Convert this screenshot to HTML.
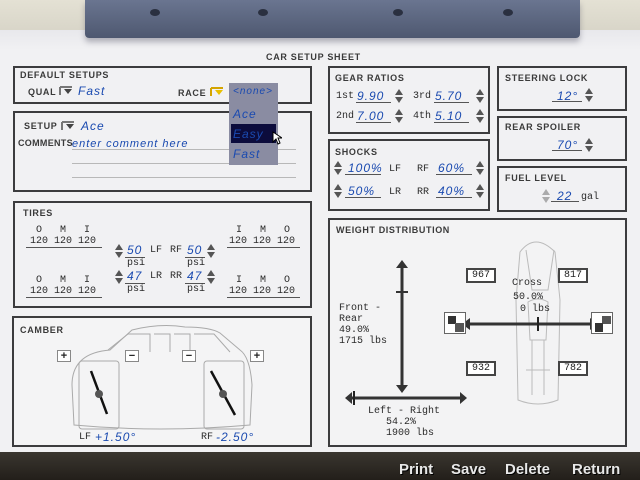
<!DOCTYPE html>
<html><head><meta charset="utf-8"><style>
*{margin:0;padding:0;box-sizing:border-box}
body{width:640px;height:480px;overflow:hidden;position:relative;background:#f1f1f3;font-family:"Liberation Sans",sans-serif}
.a{position:absolute}
.box{position:absolute;border:2px solid #3c3c3e}
.l{position:absolute;font-size:9px;font-weight:bold;color:#3a3a3a;letter-spacing:.7px;white-space:nowrap}
.m{position:absolute;font-family:"Liberation Mono",monospace;font-size:10px;color:#2a2a2a;white-space:nowrap}
.h{position:absolute;font-style:italic;color:#1a4ab0;font-size:12px;white-space:nowrap;letter-spacing:1px;font-weight:500}
.u{position:absolute;height:1px;background:#555}
.sp{position:absolute;width:10px;height:16px}
.ln{position:absolute;height:1px;background:#b8b8b8}
.pl{position:absolute;width:14px;height:12px;border:1px solid #888;background:#fff;font-size:11px;font-weight:bold;line-height:10px;text-align:center;color:#222}
.nb{position:absolute;border:2px solid #444;background:#fff;font-family:"Liberation Mono",monospace;font-size:10px;width:30px;height:15px;text-align:center;line-height:12px;color:#222}
.btn{position:absolute;top:461px;color:#e8e8e8;font-weight:bold;font-size:15px;text-shadow:1px 1px 0 #000}
</style></head><body>
<div class="a" style="left:0;top:0;width:640px;height:32px;background:linear-gradient(#e4e1d4,#d8d5c8)"></div>
<div class="a" style="left:0;top:30px;width:640px;height:20px;background:linear-gradient(#e8e8ec,#f1f1f3)"></div>
<div class="a" style="left:85px;top:0;width:495px;height:38px;background:linear-gradient(#6a7590,#4e5870);border-radius:0 0 4px 4px;box-shadow:0 4px 6px rgba(60,60,80,.35)"></div>
<div class="a" style="left:150px;top:9px;width:10px;height:7px;border-radius:50%;background:#2a3040"></div>
<div class="a" style="left:258px;top:9px;width:10px;height:7px;border-radius:50%;background:#2a3040"></div>
<div class="a" style="left:393px;top:9px;width:10px;height:7px;border-radius:50%;background:#2a3040"></div>
<div class="a" style="left:503px;top:9px;width:10px;height:7px;border-radius:50%;background:#2a3040"></div>

<div class="l" style="left:266px;top:52px">CAR SETUP SHEET</div>

<div class="box" style="left:13px;top:66px;width:299px;height:38px"></div>
<div class="l" style="left:20px;top:70px">DEFAULT SETUPS</div>
<div class="l" style="left:28px;top:87px">QUAL</div>
<svg class="a" style="left:59px;top:86px" width="14" height="10"><path d="M1 1H13M1 1V9" stroke="#777" stroke-width="2"/><path d="M5 3H13L9 8Z" fill="#444"/></svg>
<div class="h" style="left:78px;top:84px">Fast</div>
<div class="l" style="left:178px;top:88px">RACE</div>
<svg class="a" style="left:210px;top:87px" width="14" height="10"><path d="M1 1H13M1 1V9" stroke="#d4a400" stroke-width="2"/><path d="M5 3H13L9 8Z" fill="#e8c000"/></svg>

<div class="box" style="left:13px;top:111px;width:299px;height:81px"></div>
<div class="l" style="left:24px;top:121px">SETUP</div>
<svg class="a" style="left:61px;top:121px" width="14" height="10"><path d="M1 1H13M1 1V9" stroke="#777" stroke-width="2"/><path d="M5 3H13L9 8Z" fill="#444"/></svg>
<div class="h" style="left:81px;top:119px">Ace</div>
<div class="l" style="left:18px;top:138px;letter-spacing:.3px">COMMENTS</div>
<div class="h" style="left:72px;top:138px;font-size:11px">enter comment here</div>
<div class="ln" style="left:72px;top:149px;width:224px"></div>
<div class="ln" style="left:72px;top:163px;width:224px"></div>
<div class="ln" style="left:72px;top:177px;width:224px"></div>

<div class="a" style="left:229px;top:83px;width:49px;height:82px;background:#8a8ca2"></div>
<div class="a" style="left:231px;top:124px;width:45px;height:19px;background:#0c0c3c"></div>
<div class="h" style="left:233px;top:86px;font-size:10px">&lt;none&gt;</div>
<div class="h" style="left:233px;top:107px">Ace</div>
<div class="h" style="left:233px;top:127px">Easy</div>
<div class="h" style="left:233px;top:147px">Fast</div>
<svg class="a" style="left:272px;top:131px" width="10" height="14"><path d="M1 1V11L4 8L6 13L8 12L6 7H10Z" fill="#fff" stroke="#000" stroke-width="1"/></svg>

<div class="box" style="left:13px;top:201px;width:299px;height:107px"></div>
<div class="l" style="left:23px;top:208px">TIRES</div>
<div class="m" style="left:36px;top:225px">O&nbsp;&nbsp;&nbsp;M&nbsp;&nbsp;&nbsp;I</div>
<div class="m" style="left:30px;top:236px">120 120 120</div>
<div class="u" style="left:26px;top:247px;width:76px"></div>
<div class="m" style="left:36px;top:275px">O&nbsp;&nbsp;&nbsp;M&nbsp;&nbsp;&nbsp;I</div>
<div class="m" style="left:30px;top:286px">120 120 120</div>
<div class="u" style="left:26px;top:297px;width:76px"></div>
<div class="m" style="left:236px;top:225px">I&nbsp;&nbsp;&nbsp;M&nbsp;&nbsp;&nbsp;O</div>
<div class="m" style="left:229px;top:236px">120 120 120</div>
<div class="u" style="left:227px;top:247px;width:73px"></div>
<div class="m" style="left:236px;top:275px">I&nbsp;&nbsp;&nbsp;M&nbsp;&nbsp;&nbsp;O</div>
<div class="m" style="left:229px;top:286px">120 120 120</div>
<div class="u" style="left:227px;top:297px;width:73px"></div>
<div class="h" style="left:127px;top:243px">50</div><div class="u" style="left:125px;top:257px;width:20px"></div><div class="m" style="left:127px;top:258px">psi</div>
<div class="m" style="left:150px;top:245px">LF</div><div class="m" style="left:170px;top:245px">RF</div>
<div class="h" style="left:187px;top:243px">50</div><div class="u" style="left:185px;top:257px;width:20px"></div><div class="m" style="left:187px;top:258px">psi</div>
<div class="h" style="left:127px;top:269px">47</div><div class="u" style="left:125px;top:283px;width:20px"></div><div class="m" style="left:127px;top:284px">psi</div>
<div class="m" style="left:150px;top:271px">LR</div><div class="m" style="left:170px;top:271px">RR</div>
<div class="h" style="left:187px;top:269px">47</div><div class="u" style="left:185px;top:283px;width:20px"></div><div class="m" style="left:187px;top:284px">psi</div>

<div class="box" style="left:12px;top:316px;width:300px;height:131px;background:#f4f4f5"></div>
<div class="l" style="left:20px;top:325px">CAMBER</div>
<svg class="a" style="left:70px;top:325px" width="185" height="105" fill="none" stroke="#aaa" stroke-width="1">
<path d="M4 100 L2 60 Q2 28 40 25 L62 5 Q90 -2 115 2 Q140 2 150 8 L170 25 Q180 32 182 60 L180 100 Q90 108 4 100Z"/>
<path d="M38 25 L58 9 H80 V27 M84 9 H100 V27 M104 9 H120 V27 M124 9 H144 L160 27"/>
<rect x="9" y="36" width="40" height="68" rx="3"/><rect x="134" y="36" width="40" height="68" rx="3"/>
</svg>
<div class="pl" style="left:57px;top:350px">+</div>
<div class="pl" style="left:125px;top:350px">−</div>
<div class="pl" style="left:182px;top:350px">−</div>
<div class="pl" style="left:250px;top:350px">+</div>
<svg class="a" style="left:85px;top:368px" width="30" height="50"><path d="M6 3L22 46" stroke="#111" stroke-width="2.5"/><circle cx="14" cy="26" r="4" fill="#555"/></svg>
<svg class="a" style="left:205px;top:368px" width="35" height="50"><path d="M6 3L30 47" stroke="#111" stroke-width="2.5"/><circle cx="18" cy="26" r="4" fill="#555"/></svg>
<div class="m" style="left:79px;top:432px">LF</div><div class="h" style="left:95px;top:430px">+1.50°</div>
<div class="m" style="left:201px;top:432px">RF</div><div class="h" style="left:216px;top:430px">-2.50°</div>

<div class="box" style="left:328px;top:66px;width:162px;height:68px"></div>
<div class="l" style="left:335px;top:73px">GEAR RATIOS</div>
<div class="m" style="left:336px;top:91px">1st</div><div class="h" style="left:357px;top:89px">9.90</div><div class="u" style="left:356px;top:102px;width:35px"></div>
<div class="m" style="left:413px;top:91px">3rd</div><div class="h" style="left:435px;top:89px">5.70</div><div class="u" style="left:434px;top:102px;width:35px"></div>
<div class="m" style="left:336px;top:111px">2nd</div><div class="h" style="left:357px;top:109px">7.00</div><div class="u" style="left:356px;top:122px;width:35px"></div>
<div class="m" style="left:413px;top:111px">4th</div><div class="h" style="left:435px;top:109px">5.10</div><div class="u" style="left:434px;top:122px;width:35px"></div>

<div class="box" style="left:328px;top:139px;width:162px;height:72px"></div>
<div class="l" style="left:335px;top:147px">SHOCKS</div>
<div class="h" style="left:348px;top:161px">100%</div><div class="u" style="left:345px;top:174px;width:36px"></div>
<div class="m" style="left:389px;top:164px">LF</div><div class="m" style="left:417px;top:164px">RF</div>
<div class="h" style="left:438px;top:161px">60%</div><div class="u" style="left:436px;top:174px;width:36px"></div>
<div class="h" style="left:348px;top:184px">50%</div><div class="u" style="left:345px;top:197px;width:36px"></div>
<div class="m" style="left:389px;top:187px">LR</div><div class="m" style="left:417px;top:187px">RR</div>
<div class="h" style="left:438px;top:184px">40%</div><div class="u" style="left:436px;top:197px;width:36px"></div>

<div class="box" style="left:497px;top:66px;width:130px;height:45px"></div>
<div class="l" style="left:505px;top:73px">STEERING LOCK</div>
<div class="h" style="left:557px;top:89px">12°</div><div class="u" style="left:552px;top:101px;width:30px"></div>
<div class="box" style="left:497px;top:116px;width:130px;height:45px"></div>
<div class="l" style="left:505px;top:122px">REAR SPOILER</div>
<div class="h" style="left:557px;top:138px">70°</div><div class="u" style="left:552px;top:150px;width:30px"></div>
<div class="box" style="left:497px;top:166px;width:130px;height:46px"></div>
<div class="l" style="left:505px;top:173px">FUEL LEVEL</div>
<div class="h" style="left:557px;top:189px">22</div><div class="u" style="left:551px;top:201px;width:28px"></div>
<div class="m" style="left:581px;top:192px">gal</div>

<div class="box" style="left:328px;top:218px;width:299px;height:229px;background:#f3f3f4"></div>
<div class="l" style="left:336px;top:225px;letter-spacing:.6px">WEIGHT DISTRIBUTION</div>
<svg class="a" style="left:330px;top:240px" width="295" height="170" fill="none">
<g stroke="#bbb" stroke-width="1">
<path d="M190 12 Q205 -8 225 12 L230 60 L228 160 Q208 168 188 160 L186 60Z"/>
<path d="M196 10 L202 50 H218 L224 10 M198 62 Q208 56 218 62 L216 100 H200Z M196 130 H220 M202 100 V155 M214 100 V155"/>
</g>
<path d="M72 28 V145" stroke="#333" stroke-width="3"/>
<path d="M66 28 L72 20 L78 28Z M66 145 L72 153 L78 145Z" fill="#333"/>
<path d="M66 52 H78" stroke="#333" stroke-width="2"/>
<path d="M140 84 H260" stroke="#333" stroke-width="3"/>
<path d="M140 78 L132 84 L140 90Z M260 78 L268 84 L260 90Z" fill="#333"/>
<path d="M208 77 V91" stroke="#222" stroke-width="2"/>
<path d="M20 158 H130" stroke="#333" stroke-width="3"/>
<path d="M22 152 L15 158 L22 164Z M130 152 L137 158 L130 164Z" fill="#333"/>
<path d="M24 151 V165" stroke="#222" stroke-width="2"/>
</svg>
<div class="a" style="left:444px;top:312px;width:22px;height:22px;border:1px solid #666;background:#fff"><div class="a" style="left:3px;top:3px;width:8px;height:8px;background:#333"></div><div class="a" style="left:10px;top:10px;width:9px;height:9px;background:#555"></div></div>
<div class="a" style="left:591px;top:312px;width:22px;height:22px;border:1px solid #666;background:#fff"><div class="a" style="left:10px;top:3px;width:9px;height:8px;background:#555"></div><div class="a" style="left:3px;top:10px;width:8px;height:9px;background:#333"></div></div>
<div class="nb" style="left:466px;top:268px">967</div>
<div class="nb" style="left:558px;top:268px">817</div>
<div class="nb" style="left:466px;top:361px">932</div>
<div class="nb" style="left:558px;top:361px">782</div>
<div class="m" style="left:512px;top:278px">Cross</div>
<div class="m" style="left:513px;top:292px">50.0%</div>
<div class="m" style="left:520px;top:304px">0 lbs</div>
<div class="m" style="left:339px;top:303px;line-height:11px">Front -<br>Rear<br>49.0%<br>1715 lbs</div>
<div class="m" style="left:368px;top:406px;line-height:11px">Left - Right<br>&nbsp;&nbsp;&nbsp;54.2%<br>&nbsp;&nbsp;&nbsp;1900 lbs</div>

<svg width="0" height="0" style="position:absolute"><defs><g id="s"><path d="M1 7L5 1L9 7Z M1 9L5 15L9 9Z" fill="#555"/></g></defs></svg>
<svg class="sp" style="left:394px;top:88px"><use href="#s"/></svg>
<svg class="sp" style="left:475px;top:88px"><use href="#s"/></svg>
<svg class="sp" style="left:394px;top:108px"><use href="#s"/></svg>
<svg class="sp" style="left:475px;top:108px"><use href="#s"/></svg>
<svg class="sp" style="left:333px;top:160px"><use href="#s"/></svg>
<svg class="sp" style="left:475px;top:160px"><use href="#s"/></svg>
<svg class="sp" style="left:333px;top:183px"><use href="#s"/></svg>
<svg class="sp" style="left:475px;top:183px"><use href="#s"/></svg>
<svg class="sp" style="left:584px;top:87px"><use href="#s"/></svg>
<svg class="sp" style="left:584px;top:137px"><use href="#s"/></svg>
<svg class="sp" style="left:541px;top:188px;opacity:.45"><use href="#s"/></svg>
<svg class="sp" style="left:114px;top:243px"><use href="#s"/></svg>
<svg class="sp" style="left:206px;top:243px"><use href="#s"/></svg>
<svg class="sp" style="left:114px;top:269px"><use href="#s"/></svg>
<svg class="sp" style="left:206px;top:269px"><use href="#s"/></svg>

<div class="a" style="left:0;top:452px;width:640px;height:28px;background:linear-gradient(#3a3630,#231f1a)"></div>
<div class="btn" style="left:399px">Print</div>
<div class="btn" style="left:451px">Save</div>
<div class="btn" style="left:505px">Delete</div>
<div class="btn" style="left:572px">Return</div>
</body></html>
